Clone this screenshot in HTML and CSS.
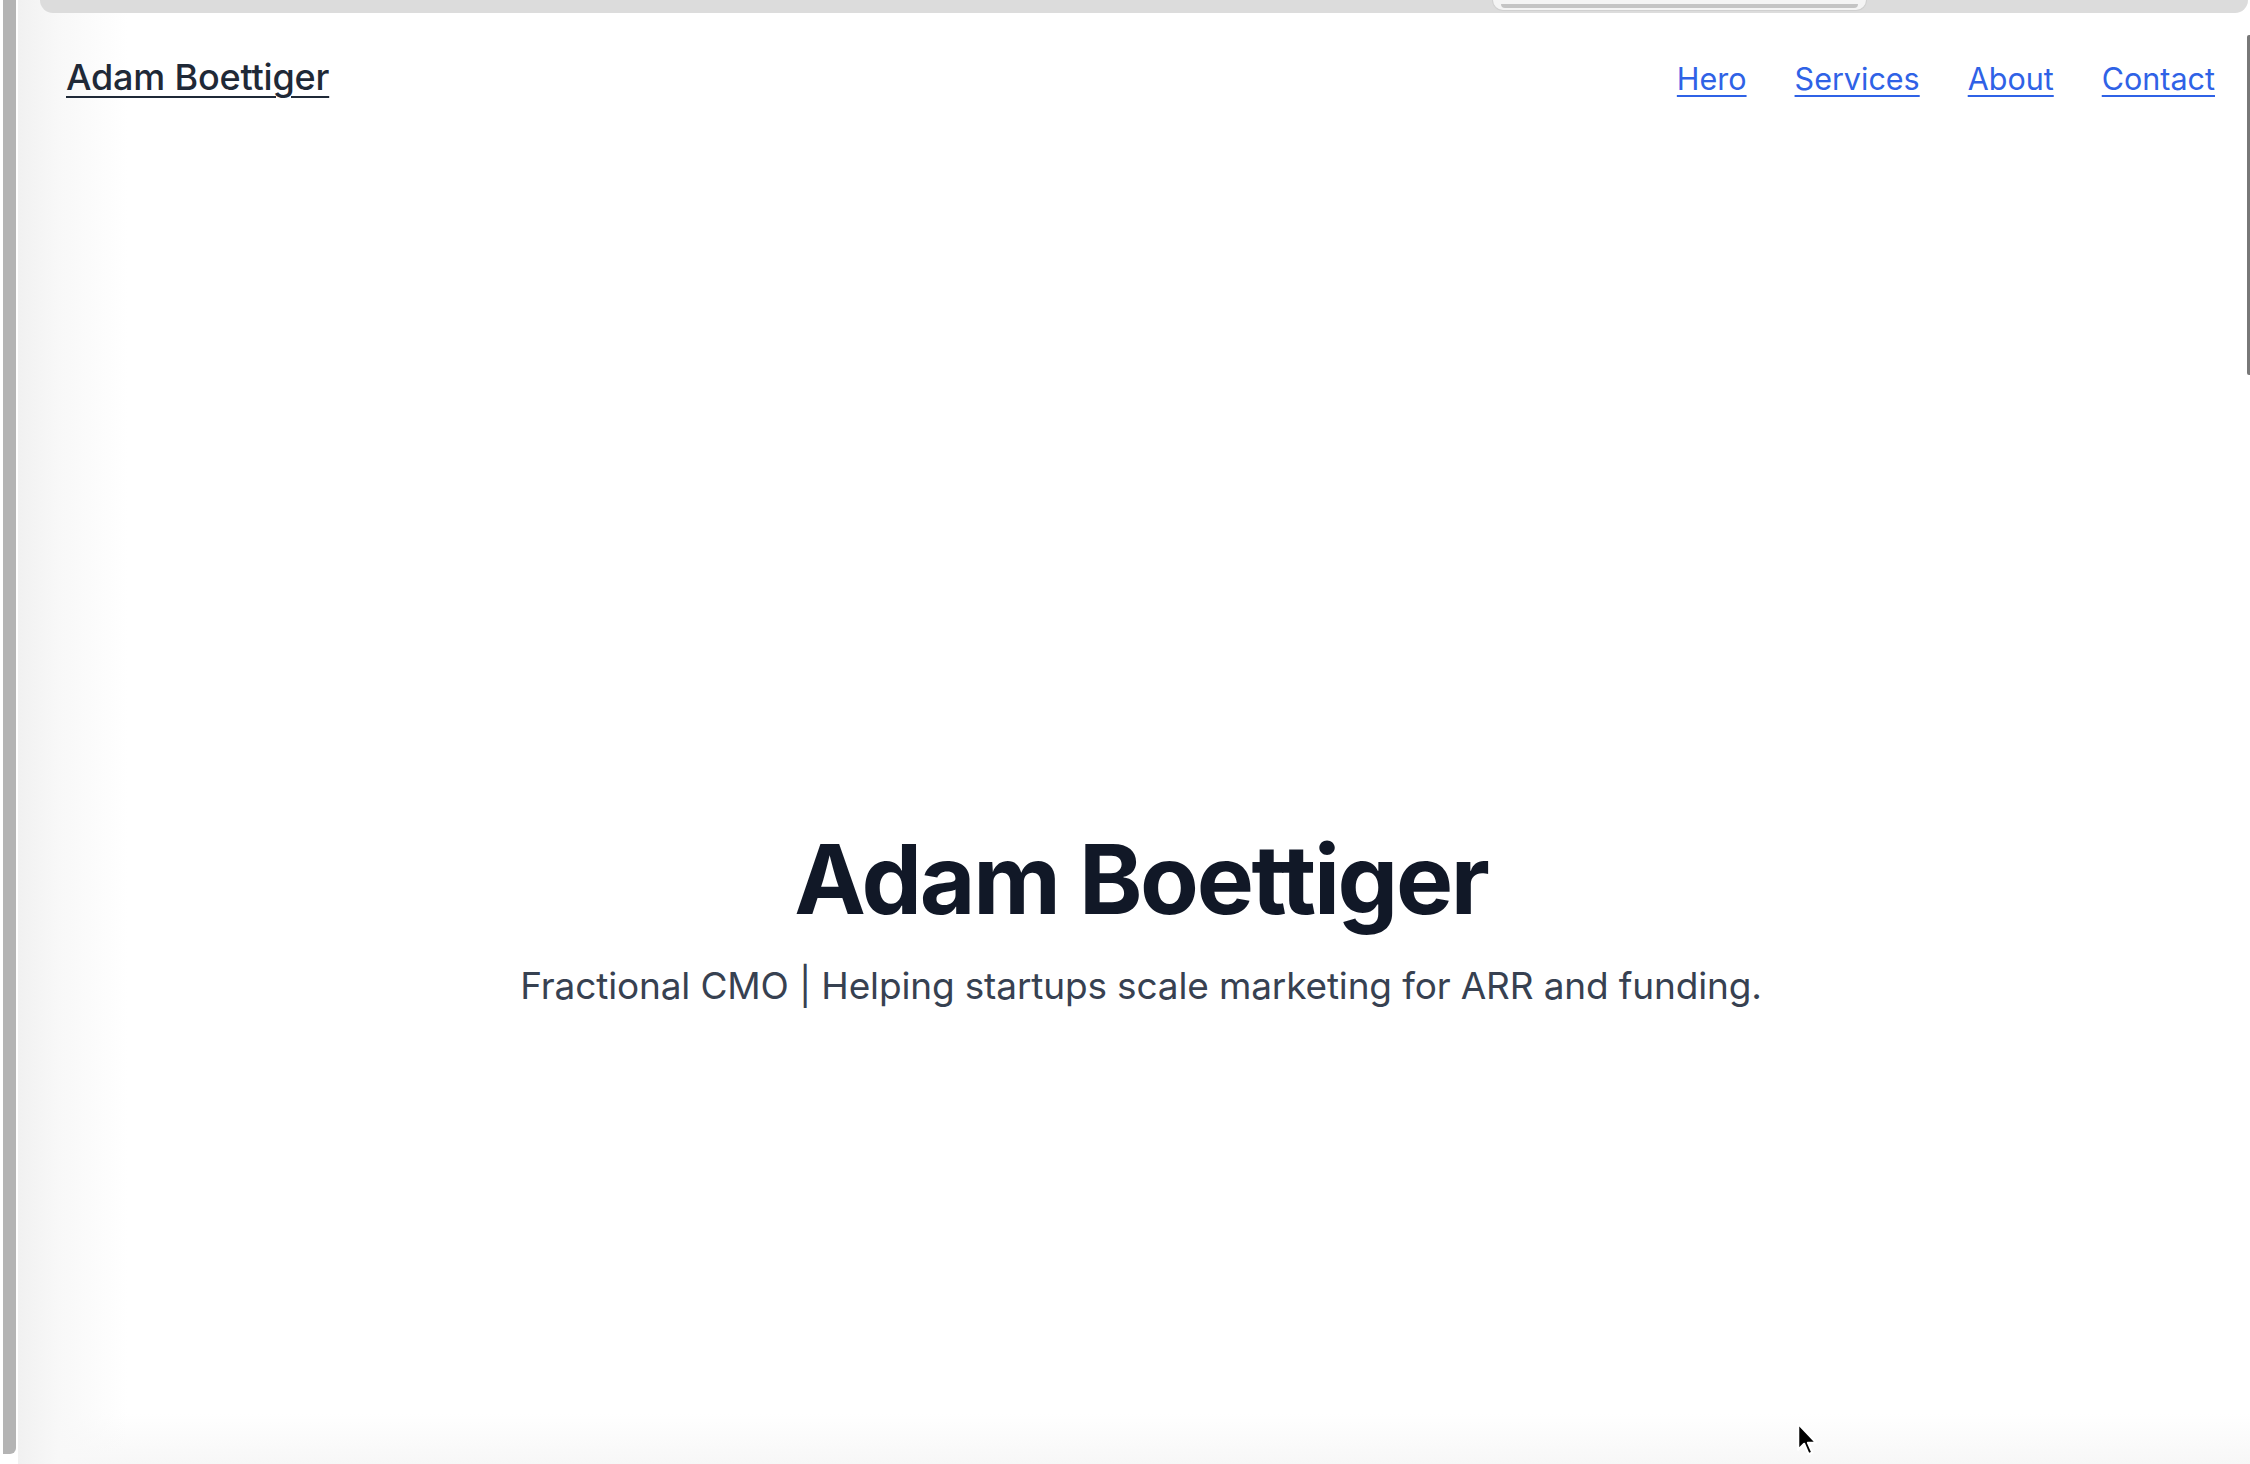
FILE: index.html
```html
<!DOCTYPE html>
<html lang="en">
<head>
<meta charset="utf-8">
<title>Adam Boettiger</title>
<link rel="stylesheet" href="styles.css">
</head>
<body>
<div class="frame">
  <div class="rail"><div class="rail-bar"></div></div>
  <div class="page">
    <div class="chrome">
      <div class="chrome-bar">
        <div class="tab"><div class="tab-inner"></div></div>
      </div>
    </div>
    <header class="nav">
      <a class="logo" href="#hero">Adam Boettiger</a>
      <nav class="links">
        <a href="#hero">Hero</a>
        <a href="#services">Services</a>
        <a href="#about">About</a>
        <a href="#contact">Contact</a>
      </nav>
    </header>
    <section class="hero" id="hero">
      <h1 class="title">Adam Boettiger</h1>
      <p class="subtitle">Fractional CMO | Helping startups scale marketing for ARR and funding.</p>
    </section>
    <div class="scroll-thumb"></div>
    <svg class="cursor" width="24" height="38" viewBox="0 0 22 34"><path d="M2 2 L2 26 L7.5 20.5 L11.5 30 L15 28.5 L11 19.5 L18.5 19.5 Z" fill="#000" stroke="#fff" stroke-width="2" stroke-linejoin="round"/></svg>
  </div>
</div>
</body>
</html>
```
FILE: styles.css
```css
* { box-sizing: border-box; }
html, body { margin: 0; padding: 0; }
body {
  width: 2250px;
  height: 1464px;
  overflow: hidden;
  background: #ffffff;
  font-family: Inter, "Noto Sans", sans-serif;
}
.frame {
  display: flex;
  height: 1464px;
}
.rail {
  width: 18px;
  flex: none;
  background: #ffffff;
  padding-left: 3px;
}
.rail-bar {
  width: 13px;
  height: 1454px;
  background: #b4b4b4;
  border-radius: 0 0 6px 0;
}
.page {
  position: relative;
  flex: 1;
  display: flex;
  flex-direction: column;
  background:
    linear-gradient(to right, #f1f1f1 0px, #f8f8f8 40px, rgba(255,255,255,0) 110px),
    linear-gradient(to top, #f7f7f7 0px, rgba(255,255,255,0) 50px),
    #ffffff;
}
.chrome {
  height: 13px;
  padding-left: 22px;
  padding-right: 2px;
  flex: none;
}
.chrome-bar {
  height: 13px;
  background: #dcdcdc;
  border-radius: 0 0 20px 20px;
  padding-left: 1452px;
}
.tab {
  width: 375px;
  height: 11px;
  border: 1.5px solid #d0d0d0;
  border-top: none;
  border-radius: 0 0 16px 16px;
  background: #f4f4f4;
  padding: 0 8px 2px;
  display: flex;
  align-items: flex-end;
}
.tab-inner {
  flex: 1;
  height: 4px;
  background: #c4c4c4;
  border-radius: 0 0 8px 8px;
}
.nav {
  display: flex;
  justify-content: space-between;
  align-items: baseline;
  padding: 42px 35px 0 48px;
}
.logo {
  font-size: 36px;
  font-weight: 500;
  color: #1f2937;
  text-decoration: underline;
  text-underline-offset: 6px;
  text-decoration-thickness: 2px;
  letter-spacing: -0.2px;
}
.links {
  display: flex;
  gap: 48px;
}
.links a {
  font-size: 30.5px;
  color: #2f62e6;
  text-decoration: underline;
  text-underline-offset: 5px;
  text-decoration-thickness: 2px;
}
.hero {
  flex: 1;
  display: flex;
  flex-direction: column;
  align-items: center;
  padding: 732px 0 0 14px;
}
.title {
  margin: 0;
  font-size: 96px;
  font-weight: 700;
  color: #111827;
  letter-spacing: -2.3px;
  line-height: 1;
}
.subtitle {
  margin: 37px 0 0;
  font-size: 37px;
  font-weight: 400;
  color: #374151;
  line-height: 1.2;
  letter-spacing: -0.15px;
}
.scroll-thumb {
  position: absolute;
  right: 0;
  top: 35px;
  width: 3px;
  height: 340px;
  background: #787878;
  border-radius: 2px 0 0 2px;
}
.cursor {
  position: absolute;
  left: 1778px;
  top: 1421px;
}
```
